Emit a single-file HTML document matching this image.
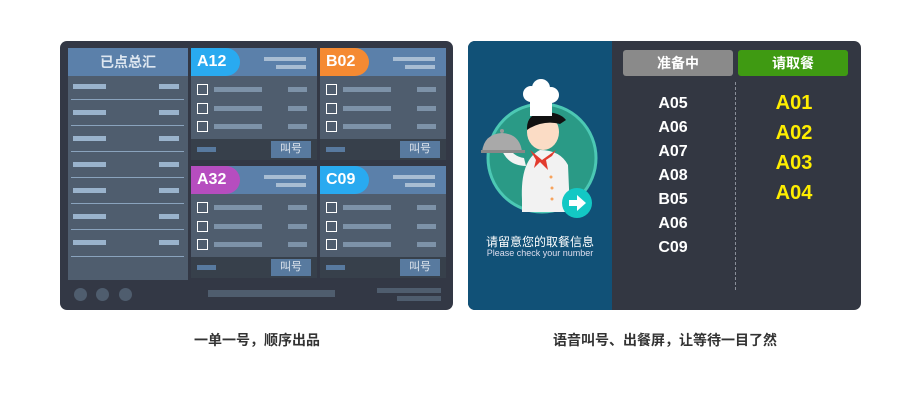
<!DOCTYPE html>
<html><head><meta charset="utf-8"><style>
*{margin:0;padding:0;box-sizing:border-box}
body{width:920px;height:400px;background:#fff;position:relative;overflow:hidden;font-family:"Liberation Sans","Noto Sans CJK SC",sans-serif}
.a{position:absolute}
.bar{position:absolute;height:5px}
.cb{position:absolute;width:11px;height:11px;border:1.5px solid #fff}
.tag{position:absolute;left:0;top:0;height:28px;width:49px;border-radius:0 14px 14px 0;color:#fff;font-weight:bold;font-size:16px;line-height:28px;padding-left:6px}
.card{position:absolute;width:126px;height:112px;background:#4f5d6e}
.card .hd{position:absolute;left:0;top:0;width:126px;height:28px;background:#5b80aa}
.card .ft{position:absolute;left:0;top:91px;width:126px;height:21px;background:#37404b}
.btn{position:absolute;left:80px;top:2px;width:40px;height:17px;background:#587a9f;color:#dfe6ee;font-size:11px;line-height:17px;text-align:center}
.num{position:absolute;color:#fff;font-weight:bold;font-size:16px;width:60px;text-align:center}
.yn{position:absolute;color:#ffee00;font-weight:bold;font-size:20px;width:80px;text-align:center}
</style></head><body>
<div class="a" style="left:60px;top:41px;width:393px;height:269px;background:#333845;border-radius:7px"></div>
<div class="a" style="left:68px;top:48px;width:120px;height:232px;background:#4f5d6e"></div>
<div class="a" style="left:68px;top:48px;width:120px;height:28px;background:#5b80aa;color:#dde6f0;font-weight:bold;font-size:14px;line-height:28px;text-align:center">已点总汇</div>

<div class="bar" style="left:73px;top:84px;width:33px;background:#9ab3cc"></div><div class="bar" style="left:159px;top:84px;width:20px;background:#9ab3cc"></div><div class="a" style="left:71px;top:99px;width:113px;height:1px;background:#8aa3bd"></div>
<div class="bar" style="left:73px;top:110px;width:33px;background:#9ab3cc"></div><div class="bar" style="left:159px;top:110px;width:20px;background:#9ab3cc"></div><div class="a" style="left:71px;top:125px;width:113px;height:1px;background:#8aa3bd"></div>
<div class="bar" style="left:73px;top:136px;width:33px;background:#9ab3cc"></div><div class="bar" style="left:159px;top:136px;width:20px;background:#9ab3cc"></div><div class="a" style="left:71px;top:151px;width:113px;height:1px;background:#8aa3bd"></div>
<div class="bar" style="left:73px;top:162px;width:33px;background:#9ab3cc"></div><div class="bar" style="left:159px;top:162px;width:20px;background:#9ab3cc"></div><div class="a" style="left:71px;top:177px;width:113px;height:1px;background:#8aa3bd"></div>
<div class="bar" style="left:73px;top:188px;width:33px;background:#9ab3cc"></div><div class="bar" style="left:159px;top:188px;width:20px;background:#9ab3cc"></div><div class="a" style="left:71px;top:203px;width:113px;height:1px;background:#8aa3bd"></div>
<div class="bar" style="left:73px;top:214px;width:33px;background:#9ab3cc"></div><div class="bar" style="left:159px;top:214px;width:20px;background:#9ab3cc"></div><div class="a" style="left:71px;top:229px;width:113px;height:1px;background:#8aa3bd"></div>
<div class="bar" style="left:73px;top:240px;width:33px;background:#9ab3cc"></div><div class="bar" style="left:159px;top:240px;width:20px;background:#9ab3cc"></div><div class="a" style="left:71px;top:256px;width:113px;height:1px;background:#8aa3bd"></div>

<div class="card" style="left:191px;top:48px"><div class="hd"></div><div class="tag" style="background:#29aaf0">A12</div>
<div class="bar" style="left:73px;top:9px;width:42px;height:4px;background:#a8bdd3"></div><div class="bar" style="left:85px;top:17px;width:30px;height:4px;background:#a8bdd3"></div>
<div class="cb" style="left:6px;top:36px"></div><div class="bar" style="left:23px;top:39px;width:48px;background:#7d92a8"></div><div class="bar" style="left:97px;top:39px;width:19px;background:#7d92a8"></div>
<div class="cb" style="left:6px;top:55px"></div><div class="bar" style="left:23px;top:58px;width:48px;background:#7d92a8"></div><div class="bar" style="left:97px;top:58px;width:19px;background:#7d92a8"></div>
<div class="cb" style="left:6px;top:73px"></div><div class="bar" style="left:23px;top:76px;width:48px;background:#7d92a8"></div><div class="bar" style="left:97px;top:76px;width:19px;background:#7d92a8"></div>
<div class="ft"><div class="bar" style="left:6px;top:8px;width:19px;background:#587a9f"></div><div class="btn">叫号</div></div></div>

<div class="card" style="left:320px;top:48px"><div class="hd"></div><div class="tag" style="background:#f58a32">B02</div>
<div class="bar" style="left:73px;top:9px;width:42px;height:4px;background:#a8bdd3"></div><div class="bar" style="left:85px;top:17px;width:30px;height:4px;background:#a8bdd3"></div>
<div class="cb" style="left:6px;top:36px"></div><div class="bar" style="left:23px;top:39px;width:48px;background:#7d92a8"></div><div class="bar" style="left:97px;top:39px;width:19px;background:#7d92a8"></div>
<div class="cb" style="left:6px;top:55px"></div><div class="bar" style="left:23px;top:58px;width:48px;background:#7d92a8"></div><div class="bar" style="left:97px;top:58px;width:19px;background:#7d92a8"></div>
<div class="cb" style="left:6px;top:73px"></div><div class="bar" style="left:23px;top:76px;width:48px;background:#7d92a8"></div><div class="bar" style="left:97px;top:76px;width:19px;background:#7d92a8"></div>
<div class="ft"><div class="bar" style="left:6px;top:8px;width:19px;background:#587a9f"></div><div class="btn">叫号</div></div></div>

<div class="card" style="left:191px;top:166px"><div class="hd"></div><div class="tag" style="background:#b64dbf">A32</div>
<div class="bar" style="left:73px;top:9px;width:42px;height:4px;background:#a8bdd3"></div><div class="bar" style="left:85px;top:17px;width:30px;height:4px;background:#a8bdd3"></div>
<div class="cb" style="left:6px;top:36px"></div><div class="bar" style="left:23px;top:39px;width:48px;background:#7d92a8"></div><div class="bar" style="left:97px;top:39px;width:19px;background:#7d92a8"></div>
<div class="cb" style="left:6px;top:55px"></div><div class="bar" style="left:23px;top:58px;width:48px;background:#7d92a8"></div><div class="bar" style="left:97px;top:58px;width:19px;background:#7d92a8"></div>
<div class="cb" style="left:6px;top:73px"></div><div class="bar" style="left:23px;top:76px;width:48px;background:#7d92a8"></div><div class="bar" style="left:97px;top:76px;width:19px;background:#7d92a8"></div>
<div class="ft"><div class="bar" style="left:6px;top:8px;width:19px;background:#587a9f"></div><div class="btn">叫号</div></div></div>

<div class="card" style="left:320px;top:166px"><div class="hd"></div><div class="tag" style="background:#29aaf0">C09</div>
<div class="bar" style="left:73px;top:9px;width:42px;height:4px;background:#a8bdd3"></div><div class="bar" style="left:85px;top:17px;width:30px;height:4px;background:#a8bdd3"></div>
<div class="cb" style="left:6px;top:36px"></div><div class="bar" style="left:23px;top:39px;width:48px;background:#7d92a8"></div><div class="bar" style="left:97px;top:39px;width:19px;background:#7d92a8"></div>
<div class="cb" style="left:6px;top:55px"></div><div class="bar" style="left:23px;top:58px;width:48px;background:#7d92a8"></div><div class="bar" style="left:97px;top:58px;width:19px;background:#7d92a8"></div>
<div class="cb" style="left:6px;top:73px"></div><div class="bar" style="left:23px;top:76px;width:48px;background:#7d92a8"></div><div class="bar" style="left:97px;top:76px;width:19px;background:#7d92a8"></div>
<div class="ft"><div class="bar" style="left:6px;top:8px;width:19px;background:#587a9f"></div><div class="btn">叫号</div></div></div>

<div class="a" style="left:74px;top:288px;width:13px;height:13px;border-radius:50%;background:#4f5d6e"></div>
<div class="a" style="left:96px;top:288px;width:13px;height:13px;border-radius:50%;background:#4f5d6e"></div>
<div class="a" style="left:119px;top:288px;width:13px;height:13px;border-radius:50%;background:#4f5d6e"></div>
<div class="a" style="left:208px;top:290px;width:127px;height:7px;background:#4f5d6e"></div>
<div class="a" style="left:377px;top:288px;width:64px;height:5px;background:#4f5d6e"></div>
<div class="a" style="left:397px;top:296px;width:44px;height:5px;background:#4f5d6e"></div>

<div class="a" style="left:468px;top:41px;width:393px;height:269px;background:#333742;border-radius:7px;overflow:hidden">
<div class="a" style="left:0;top:0;width:144px;height:269px;background:#115177"></div>
</div>
<svg class="a" style="left:468px;top:41px" width="144" height="200" viewBox="468 41 144 200">
<circle cx="542" cy="158" r="54" fill="#2a9a86" stroke="#4cc8b4" stroke-width="3"/>
<path d="M522 200 Q520 160 540 150 Q560 150 568 165 L570 212 L522 212Z" fill="#f2f2f2"/>
<path d="M506 140 Q510 156 524 158 L526 166 Q506 166 500 145Z" fill="#f2f2f2"/>
<path d="M530 150 L542 160 L556 150 L552 156 L546 160 L548 170 L540 162 L534 168 L536 160Z" fill="#e23b2e"/>
<ellipse cx="543" cy="132" rx="16" ry="18" fill="#fbdcc5"/>
<path d="M527 130 Q526 114 543 112 Q560 112 566 120 L560 124 Q545 120 530 128Z" fill="#111"/>
<rect x="530" y="96" width="22" height="20" fill="#fff"/>
<circle cx="531" cy="94" r="8" fill="#fff"/><circle cx="541" cy="88" r="9" fill="#fff"/><circle cx="551" cy="95" r="8" fill="#fff"/>
<path d="M482 152 Q484 134 502 133 Q520 134 522 152Z" fill="#a9a9a9"/>
<rect x="481" y="150" width="44" height="3" fill="#888"/>
<circle cx="502" cy="131" r="2" fill="#999"/>
<g fill="#f7a35c"><circle cx="551" cy="177" r="1.5"/><circle cx="552" cy="188" r="1.5"/><circle cx="552" cy="199" r="1.5"/></g>
<circle cx="577" cy="203" r="15" fill="#13c8c4"/>
<path d="M569 200 H577 V195 L586 203 L577 211 V206 H569Z" fill="#fff"/>
</svg>
<div class="a" style="left:468px;top:233px;width:144px;text-align:center;color:#fff;font-size:12px">请留意您的取餐信息</div>
<div class="a" style="left:468px;top:248px;width:144px;text-align:center;color:#dde;font-size:9px">Please check your number</div>

<div class="a" style="left:623px;top:50px;width:110px;height:26px;background:#8a8a8a;border-radius:3px;color:#fff;font-weight:bold;font-size:14px;line-height:26px;text-align:center">准备中</div>
<div class="a" style="left:738px;top:50px;width:110px;height:26px;background:#3f9a12;border-radius:3px;color:#fff;font-weight:bold;font-size:14px;line-height:26px;text-align:center">请取餐</div>
<div class="a" style="left:735px;top:82px;width:0;height:208px;border-left:1px dashed #8a8f99"></div>
<div class="num" style="left:643px;top:95px">A05</div>
<div class="num" style="left:643px;top:119px">A06</div>
<div class="num" style="left:643px;top:143px">A07</div>
<div class="num" style="left:643px;top:167px">A08</div>
<div class="num" style="left:643px;top:191px">B05</div>
<div class="num" style="left:643px;top:215px">A06</div>
<div class="num" style="left:643px;top:239px">C09</div>
<div class="yn" style="left:754px;top:92px">A01</div>
<div class="yn" style="left:754px;top:122px">A02</div>
<div class="yn" style="left:754px;top:152px">A03</div>
<div class="yn" style="left:754px;top:182px">A04</div>

<div class="a" style="left:107px;top:330px;width:300px;text-align:center;font-size:14px;font-weight:bold;color:#333">一单一号，顺序出品</div>
<div class="a" style="left:465px;top:330px;width:400px;text-align:center;font-size:14px;font-weight:bold;color:#333">语音叫号、出餐屏，让等待一目了然</div>
</body></html>
